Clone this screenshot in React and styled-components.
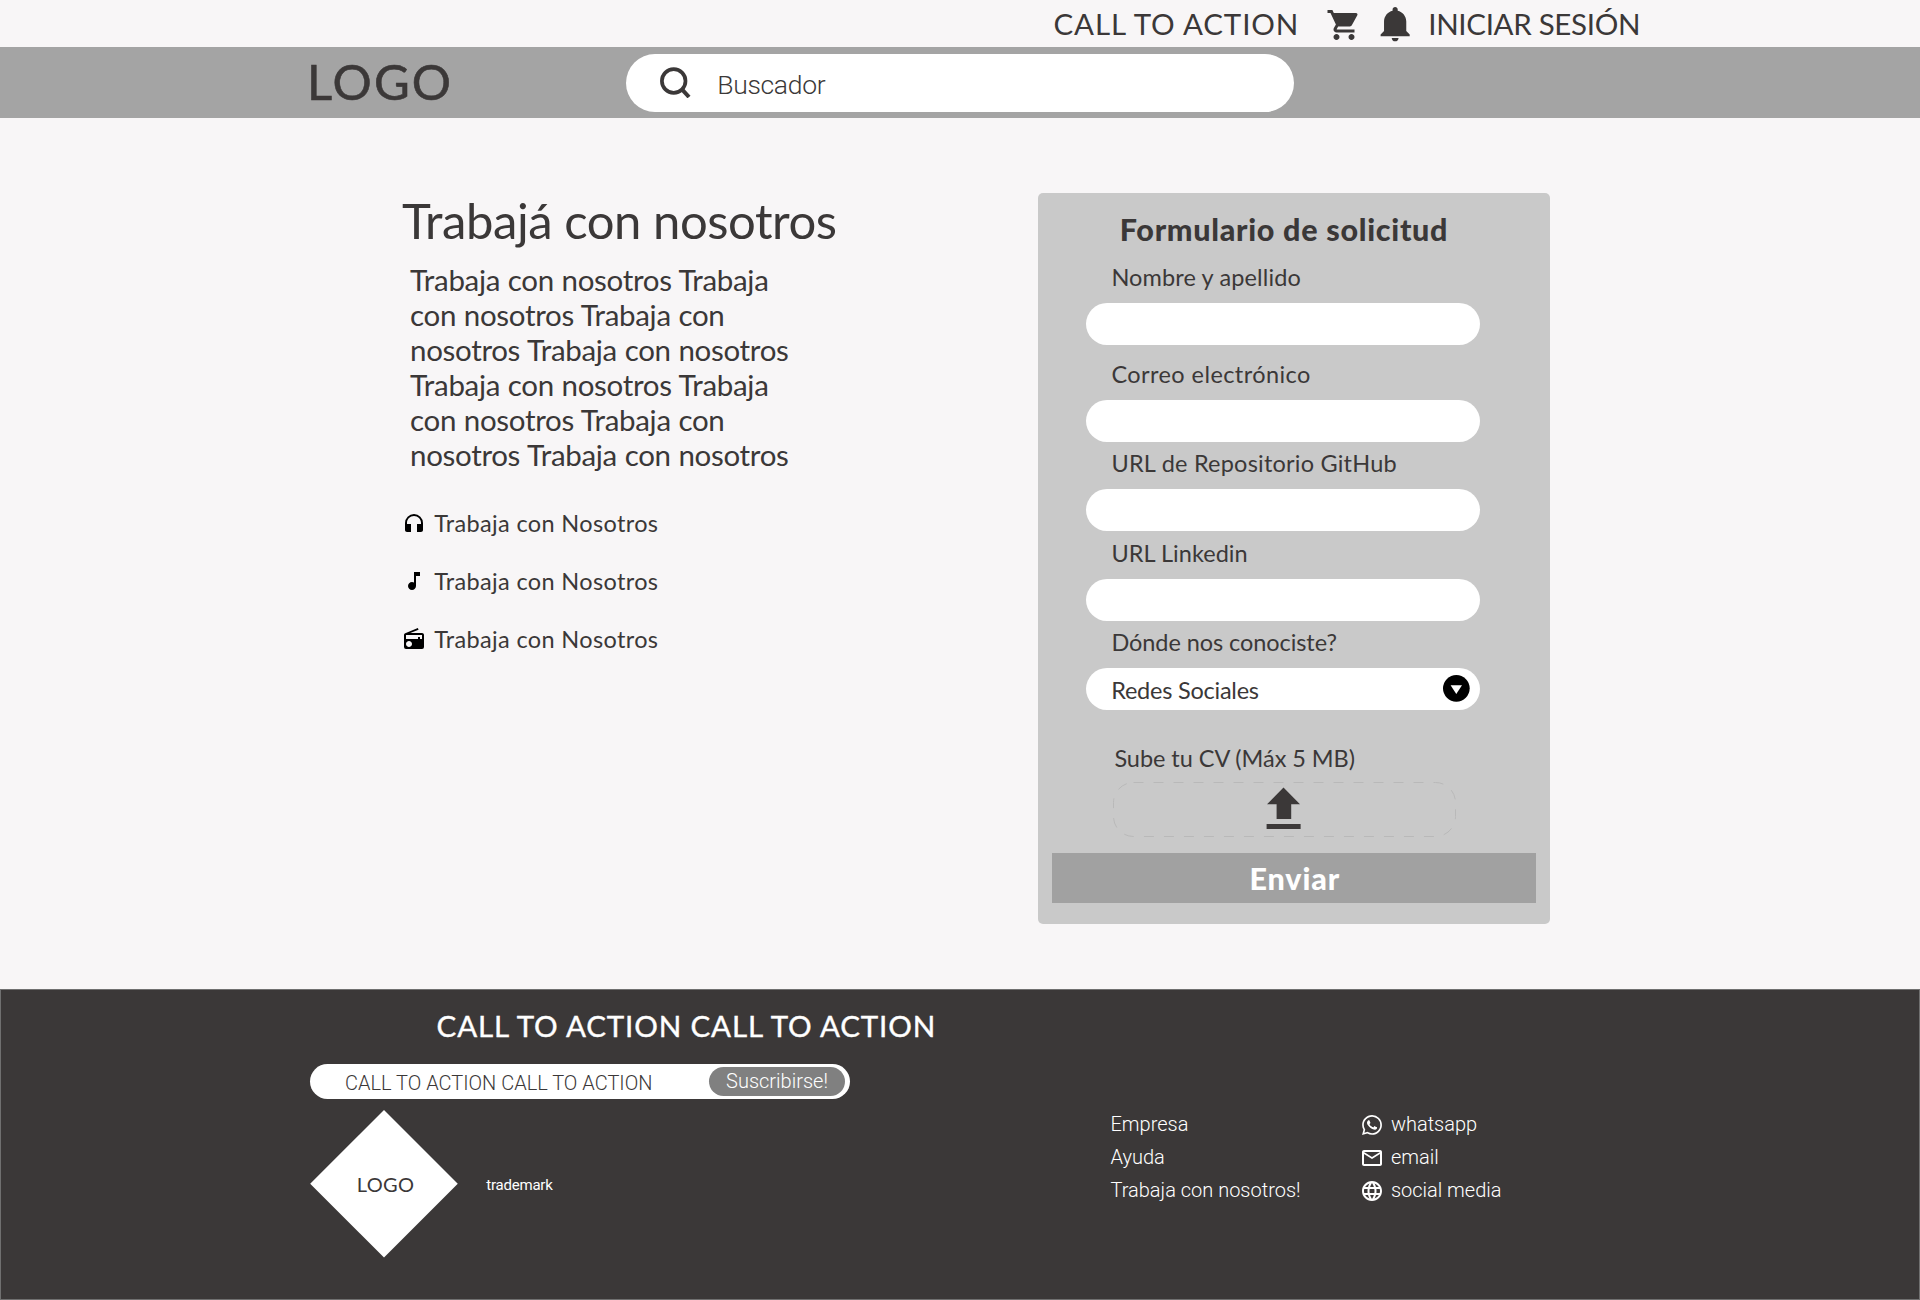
import React from "react";
import styled, { createGlobalStyle } from "styled-components";
import {
  MdShoppingCart,
  MdHeadphones,
  MdMusicNote,
  MdRadio,
  MdWhatsapp,
  MdOutlineEmail,
  MdLanguage,
} from "react-icons/md";
import { IoMdNotifications } from "react-icons/io";

const ink = "#3b3838";
const humanist = `"Gill Sans", Lato, "Open Sans", sans-serif`;
const grotesque = `Roboto, "Liberation Sans", sans-serif`;

const GlobalStyle = createGlobalStyle`
  *, *::before, *::after { box-sizing: border-box; }
  body {
    margin: 0;
    background: #f8f6f7;
    color: ${ink};
    font-family: ${humanist};
  }
  svg { display: block; flex: none; }
  button, input { font: inherit; border: 0; outline: 0; padding: 0; margin: 0; }
`;

const Page = styled.div`
  width: 1920px;
  height: 1300px;
  display: flex;
  flex-direction: column;
  overflow: hidden;
`;

/* ---- top bar ---- */
const TopBar = styled.nav`
  height: 47px;
  flex: none;
  display: flex;
  align-items: flex-start;
  padding-left: 1053.5px;
`;

const TopLink = styled.a`
  font-size: 29.5px;
  line-height: 47px;
  white-space: nowrap;
  letter-spacing: ${(p) => p.$track}px;
`;

const CallLink = styled(TopLink)`
  width: 272px;
`;

const CartIcon = styled(MdShoppingCart)`
  width: 36px;
  height: 36px;
  margin-top: 6.5px;
`;

const BellIcon = styled(IoMdNotifications)`
  width: 42.3px;
  height: 42.3px;
  margin: 3px 12px 0 12.4px;
`;

/* ---- header ---- */
const Header = styled.header`
  height: 71px;
  flex: none;
  display: flex;
  align-items: flex-start;
  padding-left: 307px;
  background: #a4a4a4;
`;

const Logo = styled.div`
  width: 319px;
  font-size: 49px;
  line-height: 68px;
  letter-spacing: 2.1px;
  -webkit-text-stroke: 0.6px ${ink};
`;

const SearchBox = styled.label`
  width: 668px;
  height: 58px;
  margin-top: 7px;
  padding-left: 34px;
  display: flex;
  align-items: flex-start;
  background: #fff;
  border-radius: 29px;
`;

const SearchGlyph = styled.svg`
  width: 31px;
  height: 31px;
  margin-top: 13px;
`;

const SearchText = styled.span`
  margin-left: 26.2px;
  font: 300 26.5px/62px ${grotesque};
  letter-spacing: -0.31px;
`;

/* ---- main ---- */
const Main = styled.main`
  height: 871px;
  flex: none;
  display: flex;
  align-items: flex-start;
  padding: 72px 0 0 402px;
`;

const Intro = styled.section`
  width: 636.4px;
  flex: none;
`;

const Title = styled.h1`
  margin: 0;
  font-size: 49px;
  font-weight: 400;
  line-height: 61px;
  letter-spacing: -0.45px;
`;

const Lead = styled.p`
  width: 390px;
  margin: 10.5px 0 0 8px;
  font-size: 29.5px;
  line-height: 35px;
  letter-spacing: -0.32px;
  word-spacing: 0.5px;
`;

const Perks = styled.ul`
  list-style: none;
  margin: 22.3px 0 0;
  padding: 0;
`;

const Perk = styled.li`
  height: 58px;
  display: flex;
  align-items: center;
  gap: 8.2px;
  font-size: 23.5px;
  line-height: 58px;
  letter-spacing: 0.35px;

  svg {
    width: 24px;
    height: 24px;
    color: #000;
  }
`;

/* ---- application form ---- */
const Card = styled.form`
  width: 511.3px;
  height: 730.5px;
  margin-top: 3px;
  padding: 18px 14px 0;
  background: #c9c9c9;
  border-radius: 5px;
`;

const FormTitle = styled.h2`
  margin: 0 0 16px 67.4px;
  font-size: 30.5px;
  font-weight: 900;
  line-height: 36px;
  letter-spacing: 0.7px;
  white-space: nowrap;
`;

const Field = styled.div`
  margin: 0 56px ${(p) => p.$after}px 34px;
`;

const FieldLabel = styled.label`
  display: block;
  margin: 0 0 11.5px 25px;
  font-size: 23.5px;
  line-height: 28px;
  letter-spacing: ${(p) => p.$track}px;
  white-space: nowrap;
`;

const TextInput = styled.input`
  display: block;
  width: 393.3px;
  height: 42px;
  background: #fff;
  border-radius: 21px;
`;

const Select = styled.div`
  width: 393.3px;
  height: 42px;
  padding: 0 9.8px 0 24.8px;
  display: flex;
  align-items: center;
  justify-content: space-between;
  background: #fff;
  border-radius: 21px;
  font-size: 23.5px;
  letter-spacing: -0.23px;
`;

const SelectText = styled.span`
  padding-top: 2px;
`;

const SelectArrow = styled.svg`
  width: 26.7px;
  height: 26.7px;
`;

const UploadLabel = styled.label`
  display: block;
  margin: 34.5px 0 9.5px 62px;
  font-size: 23.5px;
  line-height: 28px;
  letter-spacing: -0.05px;
`;

const DropZone = styled.svg`
  width: 343px;
  height: 55px;
  margin: 0 0 16.5px 60.6px;
`;

const Submit = styled.button`
  display: block;
  width: 483.4px;
  height: 50px;
  background: #a1a1a1;
  color: #fff;
  font-size: 30.5px;
  font-weight: 900;
  line-height: 50px;
  letter-spacing: 0.9px;
  text-indent: 1.5px;
  text-align: center;
`;

/* ---- footer ---- */
const Footer = styled.footer`
  height: 311px;
  flex: none;
  display: flex;
  align-items: flex-start;
  padding-left: 309.2px;
  background: ${ink};
  border: 1px solid #707070;
  color: #fff;
`;

const Newsletter = styled.section`
  width: 800.3px;
  padding-top: 18px;
`;

const FooterTitle = styled.h3`
  margin: 0 0 20px 126.4px;
  font-size: 29.5px;
  font-weight: 400;
  line-height: 36px;
  letter-spacing: 0.87px;
  white-space: nowrap;
  -webkit-text-stroke: 0.4px #fff;
`;

const Subscribe = styled.div`
  width: 539.6px;
  height: 35px;
  padding: 0 4.6px 0 34.8px;
  display: flex;
  align-items: flex-start;
  justify-content: space-between;
  background: #fff;
  border-radius: 17.5px;
`;

const SubscribeText = styled.span`
  color: ${ink};
  font: 300 20px/38px ${grotesque};
`;

const SubscribeButton = styled.button`
  width: 136.4px;
  height: 29px;
  margin-top: 3px;
  background: #808080;
  border-radius: 14.5px;
  color: #fff;
  font: 300 20px/29px ${grotesque};
`;

const Brand = styled.div`
  margin-top: 11px;
  display: flex;
  align-items: center;
`;

const Diamond = styled.div`
  width: 147.6px;
  height: 147.6px;
  display: flex;
  align-items: center;
  justify-content: center;
  padding-left: 3px;
  background: #fff;
  clip-path: polygon(50% 0, 100% 50%, 50% 100%, 0 50%);
  color: ${ink};
  font-size: 20px;
  line-height: 24px;
  letter-spacing: 0.33px;
`;

const Trademark = styled.span`
  margin: 2px 0 0 28.4px;
  font: 400 15px/20px ${grotesque};
  letter-spacing: -0.2px;
`;

const Links = styled.nav`
  display: grid;
  grid-template-columns: 249.4px auto;
  grid-auto-rows: 33px;
  padding-top: 118px;
`;

const FooterLink = styled.a`
  display: flex;
  align-items: center;
  gap: 7px;
  font: 300 20px/33px ${grotesque};
  white-space: nowrap;

  svg {
    width: 24px;
    height: 24px;
  }
`;

const fields = [
  { label: "Nombre y apellido", track: 0.13, after: 15.5 },
  { label: "Correo electrónico", track: 0.43, after: 7.5 },
  { label: "URL de Repositorio GitHub", track: 0.22, after: 8.5 },
  { label: "URL Linkedin", track: 0.04, after: 7.5 },
];

const perkIcons = [MdHeadphones, MdMusicNote, MdRadio];

const links = [
  { text: "Empresa" },
  { text: "whatsapp", Icon: MdWhatsapp },
  { text: "Ayuda" },
  { text: "email", Icon: MdOutlineEmail },
  { text: "Trabaja con nosotros!" },
  { text: "social media", Icon: MdLanguage },
];

export default function App() {
  return (
    <Page>
      <GlobalStyle />
      <TopBar>
        <CallLink $track={0.88}>CALL TO ACTION</CallLink>
        <CartIcon />
        <BellIcon />
        <TopLink $track={-0.32}>INICIAR SESIÓN</TopLink>
      </TopBar>

      <Header>
        <Logo>LOGO</Logo>
        <SearchBox>
          <SearchGlyph viewBox="0 0 31 31" fill="none" stroke={ink}>
            <circle cx="13.7" cy="14" r="11.8" strokeWidth="3.7" />
            <path d="M22 22.3 29 30" strokeWidth="4" />
          </SearchGlyph>
          <SearchText>Buscador</SearchText>
        </SearchBox>
      </Header>

      <Main>
        <Intro>
          <Title>Trabajá con nosotros</Title>
          <Lead>
            Trabaja con nosotros Trabaja con nosotros Trabaja con nosotros
            Trabaja con nosotros Trabaja con nosotros Trabaja con nosotros
            Trabaja con nosotros Trabaja con nosotros
          </Lead>
          <Perks>
            {perkIcons.map((Icon, i) => (
              <Perk key={i}>
                <Icon />
                Trabaja con Nosotros
              </Perk>
            ))}
          </Perks>
        </Intro>

        <Card>
          <FormTitle>Formulario de solicitud</FormTitle>
          {fields.map((f) => (
            <Field key={f.label} $after={f.after}>
              <FieldLabel $track={f.track}>{f.label}</FieldLabel>
              <TextInput />
            </Field>
          ))}
          <Field $after={0}>
            <FieldLabel $track={-0.07}>Dónde nos conociste?</FieldLabel>
            <Select>
              <SelectText>Redes Sociales</SelectText>
              <SelectArrow viewBox="0 0 26.7 26.7">
                <circle cx="13.35" cy="13.35" r="13.35" fill="#000" />
                <path d="M7.6 10.3h11.4L13.3 18.9z" fill="#fff" />
              </SelectArrow>
            </Select>
          </Field>
          <UploadLabel>Sube tu CV (Máx 5 MB)</UploadLabel>
          <DropZone viewBox="0 0 343 55">
            <rect
              x="0.5"
              y="0.5"
              width="342"
              height="54"
              rx="20"
              fill="none"
              stroke="#b9b9b9"
              strokeDasharray="10 10"
            />
            <path
              d="M170.5 5.6 187 22.3h-8.8V37h-14.6V22.3H154zM153.6 42h34v5h-34z"
              fill={ink}
            />
          </DropZone>
          <Submit type="button">Enviar</Submit>
        </Card>
      </Main>

      <Footer>
        <Newsletter>
          <FooterTitle>CALL TO ACTION CALL TO ACTION</FooterTitle>
          <Subscribe>
            <SubscribeText>CALL TO ACTION CALL TO ACTION</SubscribeText>
            <SubscribeButton type="button">Suscribirse!</SubscribeButton>
          </Subscribe>
          <Brand>
            <Diamond>LOGO</Diamond>
            <Trademark>trademark</Trademark>
          </Brand>
        </Newsletter>
        <Links>
          {links.map(({ text, Icon }) => (
            <FooterLink key={text}>
              {Icon && <Icon />}
              {text}
            </FooterLink>
          ))}
        </Links>
      </Footer>
    </Page>
  );
}
